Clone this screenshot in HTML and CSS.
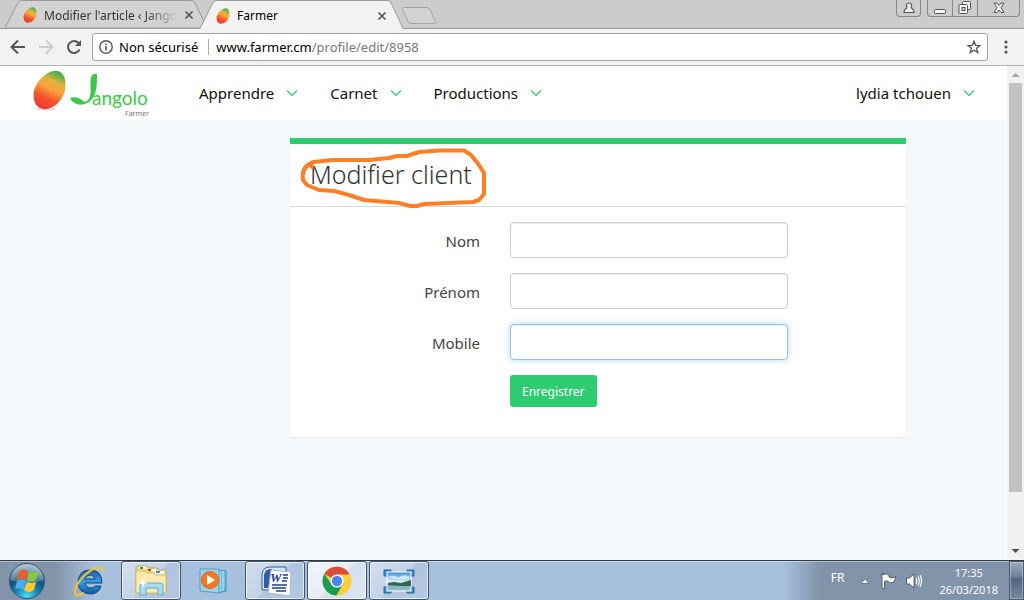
FILE: index.html
```html
<!DOCTYPE html>
<html lang="fr">
<head>
    <meta charset="UTF-8">
    <meta name="viewport" content="width=device-width, initial-scale=1.0">
    <title>Farmer</title>
    <link rel="stylesheet" href="styles.css">
</head>
<body>
    <!-- Dégradés communs -->
    <svg class="defs" width="0" height="0" aria-hidden="true">
        <defs>
            <linearGradient id="mango" x1="0.8" y1="0" x2="0.4" y2="1">
                <stop offset="0" stop-color="#2fae55"/>
                <stop offset="0.12" stop-color="#6cb04c"/>
                <stop offset="0.3" stop-color="#e3b23c"/>
                <stop offset="0.5" stop-color="#f9a03a"/>
                <stop offset="0.75" stop-color="#f2552e"/>
                <stop offset="1" stop-color="#ee3a30"/>
            </linearGradient>
            <symbol id="mango-icon" viewBox="0 0 34 42">
                <path d="M22 1C29 0 34 6 34 15C34 27 26 39 14 41C5 42 0 35 0 26C1 14 12 2 22 1Z" fill="url(#mango)"/>
            </symbol>
            <symbol id="chevron" viewBox="0 0 12 8">
                <path d="M1 1.5L6 6.5L11 1.5" fill="none" stroke="#2ecc71" stroke-width="1.2"/>
            </symbol>
            <symbol id="close" viewBox="0 0 10 10">
                <path d="M1.5 1.5L8.5 8.5M8.5 1.5L1.5 8.5" fill="none" stroke="#555" stroke-width="1.7"/>
            </symbol>
        </defs>
    </svg>

    <div class="tabstrip">
        <div class="tabs">
            <div class="tab">
                <svg class="tab-shape" viewBox="0 0 206 28" preserveAspectRatio="none"><path d="M1 28L14 3Q15 0.5 18 0.5H189Q192 0.5 193 3L205 28Z" fill="#d2d2d2" stroke="#999"/></svg>
                <svg class="favicon" width="14" height="16"><use href="#mango-icon"/></svg>
                <span class="tab-title fade">Modifier l'article ‹ Jangolo</span>
                <button class="tab-close" aria-label="Fermer"><svg width="10" height="10"><use href="#close"/></svg></button>
            </div>
            <div class="tab active">
                <svg class="tab-shape" viewBox="0 0 206 29" preserveAspectRatio="none"><path d="M0 28.5L13 3Q14 0.5 17 0.5H189Q192 0.5 193 3L205 28.5V30H0Z" fill="#f2f2f2"/><path d="M0 28.5L13 3Q14 0.5 17 0.5H189Q192 0.5 193 3L205 28.5" fill="none" stroke="#999"/></svg>
                <svg class="favicon" width="14" height="16"><use href="#mango-icon"/></svg>
                <span class="tab-title">Farmer</span>
                <button class="tab-close" aria-label="Fermer"><svg width="10" height="10"><use href="#close"/></svg></button>
            </div>
            <button class="new-tab" aria-label="Nouvel onglet"><svg width="36" height="18"><path d="M3.5 0.5H26Q28 0.5 29 2.5L34.5 14.5Q35 16.5 33 16.5H10Q8 16.5 7 14.5L1.5 2.5Q1 0.5 3.5 0.5Z" fill="#d2d2d2" stroke="#a3a3a3"/></svg></button>
        </div>
        <div class="window-controls">
            <button class="win-btn user" aria-label="Profil"><svg width="12" height="12"><path d="M6 1a2.5 2.5 0 0 1 2 4.2Q8 6 9 6.5Q11 7.5 11 10.5H1Q1 7.5 3 6.5Q4 6 4 5.2A2.5 2.5 0 0 1 6 1Z" fill="#eee" stroke="#555" stroke-width="1.2"/></svg></button>
            <div class="win-group">
                <button class="win-btn" aria-label="Réduire"><svg width="12" height="14"><rect x="0.5" y="8.5" width="11" height="4" rx="1" fill="#f5f5f5" stroke="#555"/></svg></button>
                <button class="win-btn" aria-label="Restaurer"><svg width="14" height="14"><rect x="4.5" y="0.5" width="8" height="8" rx="1" fill="#eee" stroke="#555"/><rect x="1" y="3.5" width="8.5" height="9" rx="1" fill="#f5f5f5" stroke="#555"/><rect x="4" y="6.5" width="3" height="3" fill="#ccc" stroke="#555"/></svg></button>
                <button class="win-btn wide" aria-label="Fermer la fenêtre"><svg width="12" height="12"><path d="M1 1H4L6 3.5L8 1H11L8 5.5L11 10.5H8L6 8L4 10.5H1L4 5.5Z" fill="#f5f5f5" stroke="#555"/></svg></button>
            </div>
        </div>
    </div>

    <div class="toolbar">
        <button aria-label="Précédent"><svg width="16" height="16"><path d="M15 8H2M8 1.5L1.5 8L8 14.5" fill="none" stroke="#555" stroke-width="2"/></svg></button>
        <button aria-label="Suivant"><svg width="16" height="16"><path d="M1 8H14M8 1.5L14.5 8L8 14.5" fill="none" stroke="#ccc" stroke-width="2"/></svg></button>
        <button aria-label="Actualiser"><svg width="16" height="16"><path d="M13.5 10.5A6 6 0 1 1 12.5 4" fill="none" stroke="#555" stroke-width="2"/><path d="M15 1V7H9Z" fill="#555"/></svg></button>
        <div class="address">
            <svg width="14" height="14"><circle cx="7" cy="7" r="6.2" fill="none" stroke="#555" stroke-width="1.4"/><path d="M7 6V10.5M7 3.5V5" stroke="#555" stroke-width="1.6"/></svg>
            <span class="security">Non sécurisé</span>
            <span class="url">www.farmer.cm<span class="path">/profile/edit/8958</span></span>
            <button class="star" aria-label="Favori"><svg width="14" height="14"><path d="M7 1.2L8.6 5.3L13 5.5L9.6 8.3L10.8 12.6L7 10.2L3.2 12.6L4.4 8.3L1 5.5L5.4 5.3Z" fill="none" stroke="#555" stroke-width="1.3"/></svg></button>
        </div>
        <button class="menu" aria-label="Menu"><svg width="4" height="14"><g fill="#555"><circle cx="2" cy="2" r="1.6"/><circle cx="2" cy="7" r="1.6"/><circle cx="2" cy="12" r="1.6"/></g></svg></button>
    </div>

    <div class="viewport">
        <div class="page">
            <header class="navbar">
                <a class="logo" href="#" aria-label="Jangolo Farmer">
                    <svg width="118" height="50" viewBox="0 0 118 50">
                        <ellipse cx="13" cy="41" rx="10" ry="1.5" fill="#e4d6d4"/>
                        <svg width="33" height="40" x="0" y="2" viewBox="0 0 34 42"><use href="#mango-icon"/></svg>
                        <path d="M58 9Q60 5 64 6C64 17 64 28 56 34C50 38 41 38 37 30C42 28 47 30 52 34C61 30 56 18 58 9Z" fill="#3cc84a"/>
                        <text class="logo-name" x="59" y="37">angolo</text>
                        <text class="logo-sub" x="92" y="48">Farmer</text>
                    </svg>
                </a>
                <nav class="nav">
                    <a href="#">Apprendre <svg width="12" height="8"><use href="#chevron"/></svg></a>
                    <a href="#">Carnet <svg width="12" height="8"><use href="#chevron"/></svg></a>
                    <a href="#">Productions <svg width="12" height="8"><use href="#chevron"/></svg></a>
                </nav>
                <a class="account" href="#">lydia tchouen <svg width="12" height="8"><use href="#chevron"/></svg></a>
            </header>
            <main class="content">
                <section class="card">
                    <div class="card-header">
                        <h1>Modifier client</h1>
                        <svg class="annotation" width="190" height="64" viewBox="299 146 190 64"><path d="M313 167C309 161 315 162 324 161L334 160H370L390 158L398 156H408L420 152L440 150.5H465L472 155L480 165L485 173V194L480 200L474 202L450 203L425 204L418 206H411L400 203L365 200L350 195L335 191L320 190L308 185L304 180Q302 167 313 163" fill="none" stroke="#ff7f27" stroke-width="4" stroke-linejoin="round" stroke-linecap="round"/></svg>
                    </div>
                    <form class="form">
                        <label for="nom">Nom</label>
                        <input type="text" id="nom">
                        <label for="prenom">Prénom</label>
                        <input type="text" id="prenom">
                        <label for="mobile">Mobile</label>
                        <input type="text" id="mobile" class="focused">
                        <button type="submit">Enregistrer</button>
                    </form>
                </section>
            </main>
        </div>
        <div class="scrollbar">
            <svg width="17" height="17"><path d="M4.5 11L8.5 7L12.5 11Z" fill="#a3a3a3"/></svg>
            <div class="track"><div class="thumb"></div></div>
            <svg width="17" height="17"><path d="M4.5 6L8.5 10L12.5 6Z" fill="#505050"/></svg>
        </div>
    </div>

    <div class="taskbar">
        <button class="start" aria-label="Démarrer">
            <svg width="38" height="38" viewBox="0 0 38 38">
                <defs><radialGradient id="orb" cx="0.5" cy="0.95" r="0.9"><stop offset="0" stop-color="#4fe0f5"/><stop offset="0.35" stop-color="#1689b5"/><stop offset="0.65" stop-color="#155079"/><stop offset="1" stop-color="#8fb4c9"/></radialGradient></defs>
                <circle cx="19" cy="19" r="17.5" fill="url(#orb)" stroke="#36546e"/>
                <path d="M3 18A16 16 0 0 1 35 18Q19 24 3 18Z" fill="#fff" opacity="0.25"/>
                <path d="M11 9Q15 6 20 9L18 18Q14 15 9 18Z" fill="#e9602a"/>
                <path d="M21 9Q26 12 31 9L28 18Q24 21 19 18Z" fill="#8ac63f"/>
                <path d="M9 19Q13 16 18 19L16 28Q12 25 7 27Z" fill="#4eabea"/>
                <path d="M19 20Q24 22 28 20L26 28Q21 32 16 28Z" fill="#fdc92f"/>
            </svg>
        </button>
        <div class="tasks">
            <button class="task" aria-label="Internet Explorer">
                <svg width="34" height="34" viewBox="0 0 34 34">
                    <defs><linearGradient id="ie" x1="0" y1="0" x2="0" y2="1"><stop offset="0" stop-color="#1d5a9c"/><stop offset="0.5" stop-color="#35a0e6"/><stop offset="1" stop-color="#0f56a0"/></linearGradient></defs>
                    <path d="M30 19H13Q14 24 19 24Q22 24 23 22H29Q27 30 18 30Q6 29 6 18Q7 6 18 6Q30 6 30 19ZM13 15H23Q22 11 18 11Q14 11 13 15Z" fill="url(#ie)" fill-rule="evenodd" stroke="#134779"/>
                    <path d="M31 8Q32 2 25 4Q17 6 10 14Q2 23 3 29Q4 33 12 29" fill="none" stroke="#f5c32c" stroke-width="2"/>
                </svg>
            </button>
            <button class="task open" aria-label="Explorateur Windows">
                <svg width="34" height="32" viewBox="0 0 34 32">
                    <path d="M2 3Q2 1 4 1H13L15 3H23L25 5H31Q32 5 32 7V28H2Z" fill="#f0d983" stroke="#bda35b"/>
                    <path d="M5 1.5H12V4H5Z" fill="#fff"/><path d="M6 2H9V4H6Z" fill="#20a334"/>
                    <path d="M14 4H22V6H14Z" fill="#fff"/><path d="M14 4H17V6H14Z" fill="#c2391e"/>
                    <path d="M21 6H30V9H21Z" fill="#fff"/><path d="M22 6H26V8H22Z" fill="#268ee0"/>
                    <path d="M2 6H11L13 8H20L22 10H32V28H2Z" fill="#faeab0" stroke="#d8bd6b"/>
                    <path d="M6 30V21Q6 18 9 18H26Q29 18 29 21V30H24V23H12V30Z" fill="#a9dcf0" stroke="#65a9ca"/>
                    <path d="M9 13L10 17L14 18L10 19L9 23L8 19L4 18L8 17Z" fill="#fff"/>
                </svg>
            </button>
            <button class="task" aria-label="Lecteur Windows Media">
                <svg width="30" height="28" viewBox="0 0 30 28">
                    <path d="M19 3L28 4V24L19 26Z" fill="#6cbddb" stroke="#3e92b8"/><path d="M22 4V25M25 4V24" stroke="#c2e6f3"/>
                    <path d="M2 2H21V26L2 24Z" fill="#9bd1e8" stroke="#5a9fc2"/>
                    <circle cx="12" cy="13" r="8.5" fill="#f47721" stroke="#e4651a"/>
                    <path d="M9 8L17 13L9 18Z" fill="#fff"/>
                </svg>
            </button>
            <button class="task open" aria-label="Word">
                <svg width="34" height="34" viewBox="0 0 34 34">
                    <path d="M4 10Q5 3 12 3H28V26H4Z" fill="#d9e6f8" stroke="#315d9f"/>
                    <path d="M6 11Q7 5 13 5H14V24H6Z" fill="#305ca8"/>
                    <path d="M13 6L33 8L32 32L10 29Z" fill="#f9fbff" stroke="#a9b8ce"/>
                    <text class="word-letter" x="12" y="18">W</text>
                    <path d="M25 11H30M25 14H30M24 17H29M14 21H29M14 24H28M18 27H28" stroke="#263f8a" stroke-width="1.6"/>
                </svg>
            </button>
            <button class="task open current" aria-label="Chrome">
                <svg width="30" height="30" viewBox="0 0 30 30">
                    <circle cx="15" cy="15" r="14.5" fill="#ffce3f"/>
                    <path d="M15 15L2.4 7.8A14.5 14.5 0 0 1 27.6 8.5H15Z" fill="#dc4b3e"/>
                    <path d="M2.4 7.8A14.5 14.5 0 0 0 14.5 29.5L20.6 18.5L15 15L9.4 18.2Z" fill="#179c58"/>
                    <circle cx="15" cy="15" r="6.6" fill="#fff"/><circle cx="15" cy="15" r="5.2" fill="#4587f3"/>
                </svg>
            </button>
            <button class="task open" aria-label="Visionneuse de photos">
                <svg width="32" height="28" viewBox="0 0 32 28">
                    <defs><linearGradient id="photo" x1="0" y1="0" x2="0" y2="1"><stop offset="0" stop-color="#378bdc"/><stop offset="0.5" stop-color="#d8effa"/><stop offset="0.7" stop-color="#7fb4bd"/><stop offset="1" stop-color="#8cc0c9"/></linearGradient></defs>
                    <path d="M1 3H8V9H1ZM24 3H31V9H24ZM1 20H8V26H1ZM24 20H31V26H24Z" fill="#3a8bc6" stroke="#24659a"/>
                    <rect x="4" y="5" width="24" height="19" fill="url(#photo)" stroke="#fff"/>
                    <path d="M5 16L11 15L18 16L28 13V19L16 19L5 18Z" fill="#34644e"/>
                    <path d="M5 10Q12 7 15 11Q20 7 26 9V11Q15 14 5 10Z" fill="#fff" opacity="0.6"/>
                </svg>
            </button>
        </div>
        <div class="tray">
            <span class="lang">FR</span>
            <svg class="tray-arrow" width="10" height="8"><path d="M1 6.5L5 2L9 6.5Z" fill="#fff" stroke="#59687b" stroke-width="0.8"/></svg>
            <svg width="18" height="18"><path d="M3 2.5Q6 1 9 3V5Q12 7 16 4.5L14 10Q10 12 8 9.5Q6 8 4.5 9.5V16.5H2V1.5H4Z" fill="#fff" stroke="#445268" stroke-width="0.9"/></svg>
            <svg width="18" height="18"><path d="M1.5 6H4.5L9 2V16L4.5 12H1.5Z" fill="#fff" stroke="#445268" stroke-width="0.9"/><path d="M11 6Q12.5 9 11 12M13 4.5Q15.5 9 13 13.5M15 3Q18 9 15 15" fill="none" stroke="#fff" stroke-width="1.2"/></svg>
        </div>
        <div class="clock"><span>17:35</span><span>26/03/2018</span></div>
        <button class="show-desktop" aria-label="Afficher le bureau"></button>
    </div>
</body>
</html>
```
FILE: styles.css
```css
* {
    box-sizing: border-box;
}
body {
    margin: 0;
    height: 100vh;
    display: flex;
    flex-direction: column;
    overflow: hidden;
    font-family: "Noto Sans", "Open Sans", sans-serif;
    background-color: #f4f8fb;
}
svg {
    display: block;
    flex-shrink: 0;
}
.defs {
    position: absolute;
}
button {
    padding: 0;
    border: none;
    background: none;
    font-family: inherit;
    cursor: pointer;
}
a {
    color: inherit;
    text-decoration: none;
}

/* Onglets */
.tabstrip {
    display: flex;
    justify-content: space-between;
    align-items: flex-start;
    height: 29px;
    padding: 0 4px;
    background-color: #ccc;
    border-bottom: 1px solid #999;
}
.tabs {
    display: flex;
    height: 29px;
}
.tab {
    position: relative;
    display: flex;
    align-items: center;
    width: 204px;
    height: 28px;
    padding: 2px 14px 0 19px;
    margin-right: -8px;
    font-size: 12px;
    color: #333;
}
.tab.active {
    height: 29px;
    padding: 2px 17px 0 16px;
    color: #000;
}
.tab-shape {
    position: absolute;
    top: 0;
    left: 0;
    width: 100%;
    height: 100%;
}
.favicon, .tab-title, .tab-close {
    position: relative;
}
.tab-title {
    flex: 1;
    margin: 0 6px 0 7px;
    overflow: hidden;
    white-space: nowrap;
}
.fade {
    mask-image: linear-gradient(to right, #000 75%, transparent);
}
.new-tab {
    margin: 7px 0 0 5px;
    align-self: flex-start;
}
.window-controls {
    display: flex;
    gap: 6px;
}
.win-btn {
    display: flex;
    justify-content: center;
    align-items: center;
    width: 25px;
    height: 16px;
    border-right: 1px solid #888;
}
.win-btn.wide {
    width: 41px;
    border: none;
}
.user, .win-group {
    display: flex;
    height: 17px;
    border: 1px solid #888;
    border-top: none;
    border-radius: 0 0 4px 4px;
}

/* Barre d'adresse */
.toolbar {
    display: flex;
    align-items: center;
    gap: 12px;
    height: 37px;
    padding: 0 16px 0 10px;
    background-color: #f2f2f2;
    border-bottom: 1px solid #b5b5b5;
}
.address {
    flex: 1;
    display: flex;
    align-items: center;
    height: 28px;
    margin-left: -2px;
    padding: 0 6px;
    background-color: white;
    border: 1px solid #a5a5a5;
    border-radius: 3px;
    font-size: 13px;
}
.security {
    margin-left: 6px;
    padding-right: 10px;
    border-right: 1px solid #aaa;
    line-height: 16px;
}
.url {
    flex: 1;
    margin-left: 7px;
}
.path {
    color: #777;
}
.menu {
    margin-left: 4px;
}

/* Page */
.viewport {
    flex: 1;
    display: flex;
    min-height: 0;
}
.page {
    flex: 1;
}
.navbar {
    display: flex;
    align-items: center;
    height: 54px;
    padding: 0 32px 0 33px;
    background-color: white;
    font-size: 15px;
    color: #111;
}
.nav {
    flex: 1;
    display: flex;
    gap: 32px;
    margin-left: 48px;
}
.nav a, .account {
    display: flex;
    align-items: center;
    gap: 12px;
}
.logo-name {
    font-family: Lato, sans-serif;
    font-size: 19px;
    fill: #3cc84a;
}
.logo-sub {
    font-size: 7px;
    fill: #777;
}
.content {
    display: grid;
    grid-template-columns: 290fr 616fr 101fr;
    padding-top: 18px;
}
.card {
    grid-column: 2;
    background-color: white;
    border-top: 6px solid #2ecc71;
    box-shadow: 0 1px 1px rgba(0,0,0,0.05);
}
.card-header {
    position: relative;
    padding: 14px 20px 15px;
    border-bottom: 1px solid #cfdfe8;
}
.card-header h1 {
    margin: 0;
    font-size: 25px;
    font-weight: 300;
    line-height: 33px;
    color: #333;
}
.annotation {
    position: absolute;
    top: 2px;
    left: 8px;
}
.form {
    display: grid;
    grid-template-columns: 190fr 278fr 88fr;
    gap: 15px 30px;
    padding: 15px 0 30px;
}
.form label {
    grid-column: 1;
    text-align: right;
    font-size: 15px;
    line-height: 38px;
    height: 36px;
    color: #444;
}
.form input {
    grid-column: 2;
    width: 100%;
    height: 36px;
    padding: 6px 12px;
    border: 1px solid #ccc;
    border-radius: 4px;
    box-shadow: inset 0 1px 1px rgba(0,0,0,0.075);
}
.form input.focused, .form input:focus {
    border-color: #8ec5ea;
    box-shadow: inset 0 1px 1px rgba(0,0,0,0.075), 0 0 6px rgba(102,175,233,0.5);
    outline: none;
}
.form button {
    grid-column: 2;
    justify-self: start;
    height: 32px;
    padding: 0 12px;
    border-radius: 3px;
    background-color: #2ecc71;
    color: white;
    font-size: 12px;
}
.scrollbar {
    display: flex;
    flex-direction: column;
    width: 17px;
    background-color: #f1f1f1;
}
.track {
    flex: 1;
    padding: 0 2px;
}
.thumb {
    height: 89%;
    background-color: #c1c1c1;
}

/* Barre des tâches */
.taskbar {
    display: flex;
    align-items: center;
    height: 40px;
    padding-left: 8px;
    border-top: 1px solid #303b49;
    background: linear-gradient(to right, #8294aa 0, #8294aa 55px, #a7c0de 95px, #a7c0de calc(100% - 240px), #8294aa calc(100% - 205px));
    box-shadow: inset 0 1px 0 rgba(255,255,255,0.4);
}
.tasks {
    flex: 1;
    display: flex;
    gap: 2px;
    margin-left: 13px;
}
.task {
    display: flex;
    justify-content: center;
    align-items: center;
    width: 60px;
    height: 39px;
    border: 1px solid transparent;
    border-radius: 3px;
}
.task.open {
    border-color: #44566d;
    background: linear-gradient(135deg, #d2deed 0%, #c3d2e6 48%, #b0c4df 52%, #b4c8e2 100%);
    box-shadow: inset 0 0 0 1px rgba(255,255,255,0.6);
}
.task.current {
    background: linear-gradient(135deg, #f0f5fa 0%, #e6edf6 48%, #d5e0ee 52%, #dce6f2 100%);
}
.tray {
    display: flex;
    align-items: center;
    gap: 7px;
    color: white;
}
.lang {
    margin-right: 9px;
    padding-bottom: 6px;
    font-size: 12px;
    line-height: 14px;
}
.tray-arrow {
    margin-right: 3px;
}
.clock {
    display: flex;
    flex-direction: column;
    align-items: center;
    margin: 0 11px 0 16px;
    color: white;
    font-size: 11px;
    line-height: 17px;
}
.show-desktop {
    width: 15px;
    height: 39px;
    border: 1px solid #4d5a6b;
    background: linear-gradient(to bottom, #9aa9ba, #6f8196 40%, #53667e 45%, #788ba3);
    box-shadow: inset 0 0 0 1px rgba(255,255,255,0.3);
}
.word-letter {
    font-family: "Liberation Serif", serif;
    font-size: 13px;
    font-weight: bold;
    font-style: italic;
    fill: #263f8a;
}
```
